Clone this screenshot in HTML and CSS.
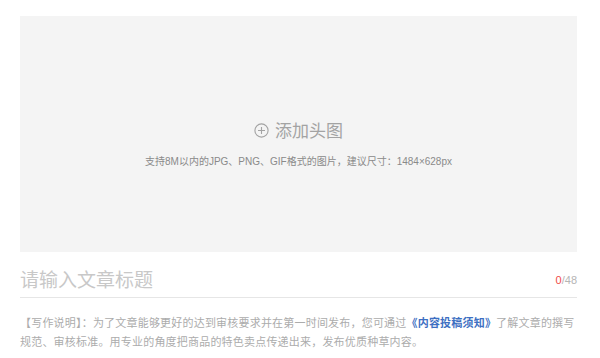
FILE: index.html
```html
<!DOCTYPE html>
<html lang="zh">
<head>
<meta charset="utf-8">
<link rel="stylesheet" href="styles.css">
</head>
<body>
<div class="editor">
  <div class="cover">
    <div class="cover-add">
      <svg class="plus" width="15" height="15" viewBox="0 0 15 15"><circle cx="7.5" cy="7.5" r="6.6" fill="none" stroke="#a3a3a3" stroke-width="1.1"/><path d="M7.5 4v7M4 7.5h7" stroke="#a3a3a3" stroke-width="1.1"/></svg>
      <span>添加头图</span>
    </div>
    <div class="cover-tip">支持8M以内的JPG、PNG、GIF格式的图片，建议尺寸：1484×628px</div>
  </div>
  <div class="title-row">
    <span class="title-ph">请输入文章标题</span>
    <span class="counter"><em>0</em>/48</span>
  </div>
  <p class="note">【写作说明】：为了文章能够更好的达到审核要求并在第一时间发布，您可通过<span class="link">《内容投稿须知》</span>了解文章的撰写规范、审核标准。用专业的角度把商品的特色卖点传递出来，发布优质种草内容。</p>
</div>
</body>
</html>
```
FILE: styles.css
```css
* { box-sizing: border-box; }
body {
  margin: 0;
  background: #fff;
  font-family: "Noto Sans CJK SC", "Noto Sans", sans-serif;
}
.editor {
  width: 557px;
  margin: 16px 0 0 20px;
}
.cover {
  height: 236px;
  background: #f4f4f4;
  display: flex;
  flex-direction: column;
  align-items: center;
  padding-top: 102px;
}
.cover-add {
  display: flex;
  align-items: center;
  gap: 6px;
  color: #a3a3a3;
  font-size: 17px;
  line-height: 24px;
}
.plus { display: block; }
.cover-tip {
  margin-top: 13px;
  font-family: "Liberation Sans", "Noto Sans CJK SC", sans-serif;
  font-size: 10px;
  line-height: 14px;
  color: #8a8a8a;
}
.title-row {
  display: flex;
  justify-content: space-between;
  align-items: center;
  height: 46px;
  border-bottom: 1px solid #e6e6e6;
  padding-top: 8px;
}
.title-ph {
  font-size: 19px;
  color: #c8c8c8;
}
.counter {
  font-size: 11px;
  color: #b5b5b5;
  font-family: "Liberation Sans", sans-serif;
  padding-top: 2px;
}
.counter em {
  font-style: normal;
  color: #f04b4b;
}
.note {
  margin: 15px 0 0;
  font-size: 11px;
  line-height: 19px;
  letter-spacing: 0.2px;
  color: #acacac;
}
.link {
  color: #3d6fc2;
  font-weight: bold;
}
```
